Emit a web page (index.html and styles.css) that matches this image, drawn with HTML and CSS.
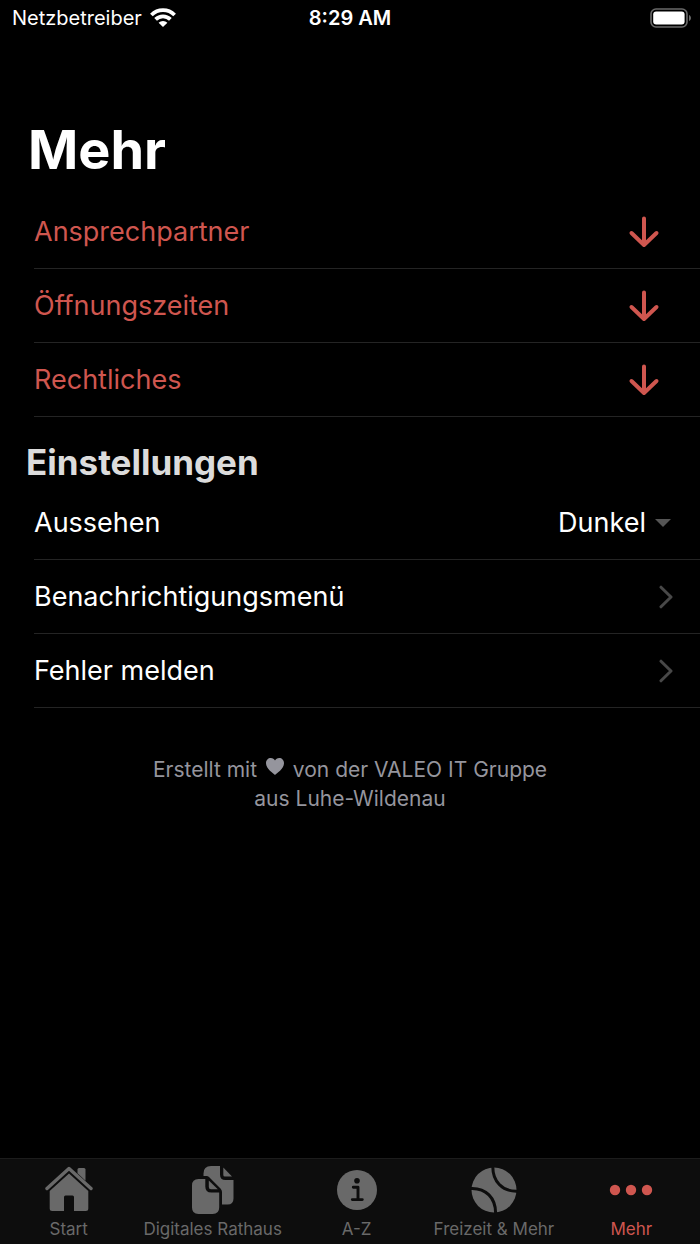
FILE: index.html
```html
<!DOCTYPE html>
<html lang="de">
<head>
<meta charset="utf-8">
<meta name="viewport" content="width=device-width, initial-scale=1">
<title>Mehr</title>
<link rel="stylesheet" href="styles.css">
</head>
<body>
<div class="app">
  <header class="status">
    <div class="status-carrier">
      <span>Netzbetreiber</span>
      <svg class="wifi" viewBox="0 0 26 20" aria-hidden="true">
        <g fill="none" stroke="currentColor" stroke-width="3.8">
          <path d="M1.4 7a16.4 16.400 0 0 1 23.200 0"/>
          <path d="M5.600 11.400a10.500 10.500 0 0 1 14.800 0"/>
        </g>
        <path fill="currentColor" d="M8.600 14.700a6.300 6.300 0 0 1 8.800 0L13 19z"/>
      </svg>
    </div>
    <time class="status-time">8:29 AM</time>
    <svg class="battery" viewBox="0 0 42 20" aria-hidden="true">
      <rect x="1" y="1" width="36" height="18" rx="5" fill="none" stroke="#6a6a6a" stroke-width="1.6"/>
      <rect x="3.2" y="3.4" width="31.4" height="13.2" rx="3" fill="#fff"/>
      <path d="M39 7c2.6 1 2.6 5 0 6z" fill="#6a6a6a"/>
    </svg>
  </header>

  <main class="content">
    <h1 class="title">Mehr</h1>
    <div class="list">
      <button class="row row-accent" type="button"><span>Ansprechpartner</span>
        <svg class="arrow" viewBox="0 0 32 32" aria-hidden="true"><path d="M16 2.500v26M3.500 17 16 29l12.500-12"/></svg></button>
      <button class="row row-accent" type="button"><span>Öffnungszeiten</span>
        <svg class="arrow" viewBox="0 0 32 32" aria-hidden="true"><path d="M16 2.500v26M3.500 17 16 29l12.500-12"/></svg></button>
      <button class="row row-accent" type="button"><span>Rechtliches</span>
        <svg class="arrow" viewBox="0 0 32 32" aria-hidden="true"><path d="M16 2.500v26M3.500 17 16 29l12.500-12"/></svg></button>
    </div>

    <h2 class="subtitle">Einstellungen</h2>
    <div class="list">
      <div class="row">
        <label for="theme">Aussehen</label>
        <span class="picker">
          <select id="theme" class="picker-select">
            <option selected>Dunkel</option>
            <option>Hell</option>
            <option>System</option>
          </select>
          <svg class="caret" viewBox="0 0 16 8" aria-hidden="true"><path d="M0 0h16L8 8z"/></svg>
        </span>
      </div>
      <a class="row" href="#benachrichtigungen"><span>Benachrichtigungsmenü</span>
        <svg class="chevron" viewBox="0 0 14 24" aria-hidden="true"><path d="M2 2.200 12 12 2 21.800"/></svg></a>
      <a class="row" href="#fehler"><span>Fehler melden</span>
        <svg class="chevron" viewBox="0 0 14 24" aria-hidden="true"><path d="M2 2.200 12 12 2 21.800"/></svg></a>
    </div>

    <p class="credit">Erstellt mit <svg class="heart" viewBox="0 0 18 17" role="img" aria-label="Herz"><path d="M9 17C7.500 15.300 0 11 0 5.200 0 2 2.200 0 4.800 0 6.800 0 8.200 1 9 2.500 9.800 1 11.200 0 13.200 0 15.800 0 18 2 18 5.200 18 11 10.500 15.300 9 17z"/></svg> von der VALEO IT Gruppe<br>aus Luhe-Wildenau</p>
  </main>

  <nav class="tabs">
    <a class="tab" href="#start">
      <svg class="tab-icon" viewBox="0 0 48 48" aria-hidden="true">
        <path d="M32.500 3.500q0-1.500 1.500-1.500h5q1.500 0 1.500 1.500v11.200l-8-7.400z"/>
        <path d="M2 22.500 24 2.500l22 20" fill="none" stroke="currentColor" stroke-width="3.400" stroke-linecap="round" stroke-linejoin="round"/>
        <path d="M24 7.400 43.300 24.900V42.500q0 2.500-2.500 2.500H29V31q0-1.500-1.500-1.500h-7Q19 29.500 19 31v14H7.200q-2.500 0-2.500-2.500V24.900z"/>
      </svg>
      <span>Start</span>
    </a>
    <a class="tab" href="#rathaus">
      <svg class="tab-icon" viewBox="0 0 48 48" aria-hidden="true">
        <path d="M14.500 10V7.500Q14.500 0 22 0H31v8.500q0 5.500 5.500 5.500H44.500v18.500q0 6-6 6H33V26q0-2-1.500-3.500L20 11q-1-1-2.500-1z"/>
        <path d="M34.300 1.500 43 10.400H35.800q-1.500 0-1.500-1.500z"/>
        <path d="M9.500 13H16.300V20.500Q16.300 26.500 22.300 26.500H30.200V41.500q0 6.500-6.500 6.500H9.500Q3 48 3 41.500V19.500Q3 13 9.500 13z"/>
        <path d="M19.800 14.500 28.800 23.200H22q-2.200 0-2.200-2.200z"/>
      </svg>
      <span>Digitales Rathaus</span>
    </a>
    <a class="tab" href="#a-z">
      <svg class="tab-icon" viewBox="0 0 48 48" aria-hidden="true">
        <circle cx="24" cy="24" r="20"/>
        <g class="cut"><circle cx="24" cy="14.700" r="2.800" class="cut-fill"/><path d="M20.300 21.200H25v12.400M19.300 33.600H29.300" stroke-width="2.900" stroke-linecap="round" stroke-linejoin="round"/></g>
      </svg>
      <span>A-Z</span>
    </a>
    <a class="tab" href="#freizeit">
      <svg class="tab-icon" viewBox="0 0 48 48" aria-hidden="true">
        <circle cx="24" cy="24" r="22.500"/>
        <g class="cut" stroke-width="3"><path d="M22.800 0C22.500 15 32 26 48 25.200M0 22.500C16 21.500 26 32 25.600 48"/></g>
      </svg>
      <span>Freizeit &amp; Mehr</span>
    </a>
    <a class="tab tab-active" href="#mehr" aria-current="page">
      <svg class="tab-icon" viewBox="0 0 48 48" aria-hidden="true"><circle cx="8" cy="24" r="5.200"/><circle cx="24" cy="24" r="5.200"/><circle cx="40" cy="24" r="5.200"/></svg>
      <span>Mehr</span>
    </a>
  </nav>
</div>
</body>
</html>
```
FILE: styles.css
```css
* {
  box-sizing: border-box;
}

body {
  margin: 0;
  background: #000;
  color: #fff;
  font-family: Inter, "Liberation Sans", sans-serif;
}

.app {
  display: flex;
  flex-direction: column;
  min-height: 100vh;
}

.status {
  display: grid;
  grid-template-columns: 1fr auto 1fr;
  align-items: center;
  height: 36px;
  padding: 0 8px;
  font-size: 20px;
}

.status-carrier {
  display: flex;
  align-items: center;
  gap: 8px;
  padding-left: 4px;
}

.wifi {
  width: 26px;
  height: 20px;
}

.status-time {
  font-weight: 600;
}

.battery {
  justify-self: end;
  width: 42px;
  height: 20px;
}

.content {
  flex: 1;
}

.title {
  margin: 80px 28px 11px;
  font-size: 54px;
  line-height: 68px;
  font-weight: 700;
}

.subtitle {
  margin: 29px 26px 8px;
  color: #dcdcdc;
  font-size: 35px;
  line-height: 32px;
  font-weight: 700;
}

.list {
  margin-left: 34px;
}

.row {
  display: flex;
  align-items: center;
  justify-content: space-between;
  width: 100%;
  min-height: 74px;
  padding: 0 27px 0 0;
  border: 0;
  border-bottom: 1px solid #242424;
  background: none;
  color: #fff;
  font: inherit;
  font-size: 27px;
  line-height: 36px;
  text-align: left;
  text-decoration: none;
}

.row-accent {
  padding-right: 40px;
  color: #cf564f;
}

.arrow {
  width: 32px;
  height: 32px;
  fill: none;
  stroke: currentColor;
  stroke-width: 4;
  stroke-linecap: round;
  stroke-linejoin: round;
}

.chevron {
  width: 14px;
  height: 24px;
  fill: none;
  stroke: #484848;
  stroke-width: 3;
  stroke-linecap: round;
  stroke-linejoin: round;
}

.picker {
  display: flex;
  align-items: center;
  gap: 9px;
  margin-right: 2px;
}

.picker-select {
  appearance: none;
  padding: 0;
  border: 0;
  background: none;
  color: inherit;
  font: inherit;
  text-align-last: right;
}

.caret {
  width: 16px;
  height: 8px;
  fill: #555;
}

.credit {
  margin: 47px 24px;
  color: #95959d;
  font-size: 21px;
  line-height: 29px;
  text-align: center;
}

.heart {
  width: 18px;
  height: 17px;
  margin: 0 3px 2px;
  fill: currentColor;
}

.tabs {
  position: sticky;
  bottom: 0;
  display: flex;
  border-top: 1px solid #1c1c1c;
  background: #0d0d0d;
}

.tab {
  display: flex;
  flex: 1 1 0;
  flex-direction: column;
  align-items: center;
  gap: 5px;
  padding: 7px 6px 5px;
  color: #696969;
  font-size: 17px;
  line-height: 20px;
  font-weight: 400;
  text-decoration: none;
  white-space: nowrap;
}

.tab-active {
  color: #cf564f;
}

.tab-icon {
  width: 48px;
  height: 48px;
  fill: currentColor;
}

.cut {
  fill: none;
  stroke: #0d0d0d;
}

.cut-fill {
  fill: #0d0d0d;
  stroke: none;
}
```
